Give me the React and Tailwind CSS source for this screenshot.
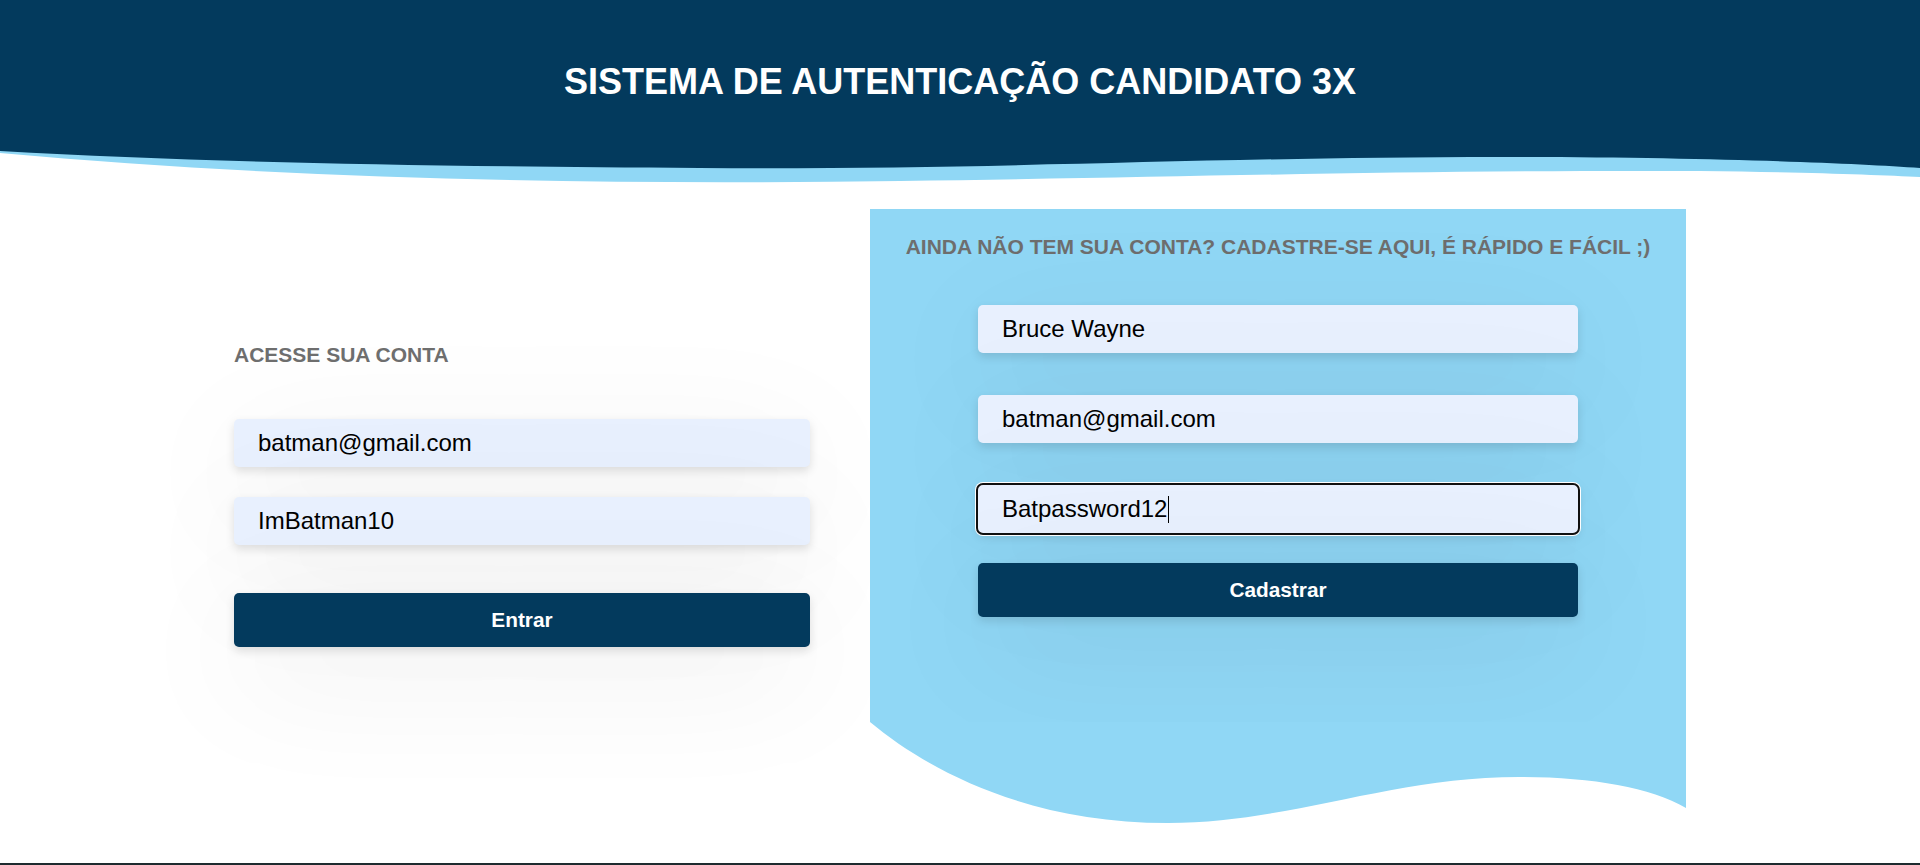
import React from "react";

const glow = "shadow-[0_4px_10px_rgba(0,0,0,0.12),0_30px_130px_rgba(0,0,0,0.08)]";
const inputCls = `block w-full h-[48px] rounded-[5px] bg-[#e8f0fe] px-[24px] text-[24px] text-black outline-none ${glow}`;

function Field({ value, className = "" }) {
    return <input type="text" defaultValue={value} readOnly className={`${inputCls} ${className}`} />;
}

export default function App() {
    return (
        <div className="relative flex h-[865px] flex-col overflow-hidden bg-white font-['Liberation_Sans',Arial,sans-serif]">
            {/* Header */}
            <header className="flex h-[140px] items-center justify-center bg-[#033a5d] pt-[23px]">
                <h1 className="text-[36px] font-bold text-white">SISTEMA DE AUTENTICAÇÃO CANDIDATO 3X</h1>
            </header>
            <svg className="block h-[45px] w-full" viewBox="0 0 1920 45" preserveAspectRatio="none">
                <path d="M0,13 C300,40 600,45 900,41 C1200,37 1400,30 1700,31 C1800,32 1880,35 1920,37 L1920,0 L0,0 Z" fill="#90d7f5" />
                <path d="M0,11 C200,22 400,26 700,28 C1000,30 1200,17 1500,17 C1700,17 1850,23 1920,28 L1920,0 L0,0 Z" fill="#033a5d" />
            </svg>

            {/* Main */}
            <main className="flex items-start gap-[10px] pl-[184px] pr-[234px] pt-[24px]">
                {/* Login */}
                <div className="mt-[84px] w-[676px] p-[50px]">
                    <h2 className="text-[21px] font-bold leading-[24px] text-[#6e6e6e]">ACESSE SUA CONTA</h2>
                    <Field value="batman@gmail.com" className="mt-[52px]" />
                    <Field value="ImBatman10" className="mt-[30px]" />
                    <button className={`mt-[48px] block h-[54px] w-full rounded-[5px] bg-[#033a5d] text-[20.8px] font-bold text-white ${glow}`}>
                        Entrar
                    </button>
                </div>

                {/* Cadastro */}
                <div className="flex w-[816px] flex-col">
                    <div className="flex h-[513px] flex-col items-center bg-[#90d7f5] pt-[26px]">
                        <h2 className="text-[21px] font-bold leading-[24px] text-[#6e6e6e]">
                            AINDA NÃO TEM SUA CONTA? CADASTRE-SE AQUI, É RÁPIDO E FÁCIL ;)
                        </h2>
                        <div className="mt-[6px] w-[680px] px-[40px] py-[40px]">
                            <Field value="Bruce Wayne" />
                            <Field value="batman@gmail.com" className="mt-[42px]" />
                            <div className="mt-[42px] flex h-[48px] w-full items-center rounded-[5px] bg-[#e8f0fe] px-[24px] text-[24px] text-black outline-2 outline-[#101010] shadow-[0_0_0_3px_#ffffff,0_4px_10px_rgba(0,0,0,0.12),0_30px_130px_rgba(0,0,0,0.08)]">
                                <span>Batpassword12</span>
                                <span className="ml-px h-[27px] w-px bg-black" />
                            </div>
                            <button className={`mt-[30px] block h-[54px] w-full rounded-[5px] bg-[#033a5d] text-[20.8px] font-bold text-white ${glow}`}>
                                Cadastrar
                            </button>
                        </div>
                    </div>
                    <svg className="block h-[101px] w-[816px]" viewBox="0 0 816 101">
                        <path d="M0,0 C60,50 160,101 298,101 C420,101 520,55 649,55 C720,55 780,65 816,86 L816,0 Z" fill="#90d7f5" />
                    </svg>
                </div>
            </main>

            <div className="mt-auto h-[2px] w-full bg-[#1e2b2f]" />
        </div>
    );
}
